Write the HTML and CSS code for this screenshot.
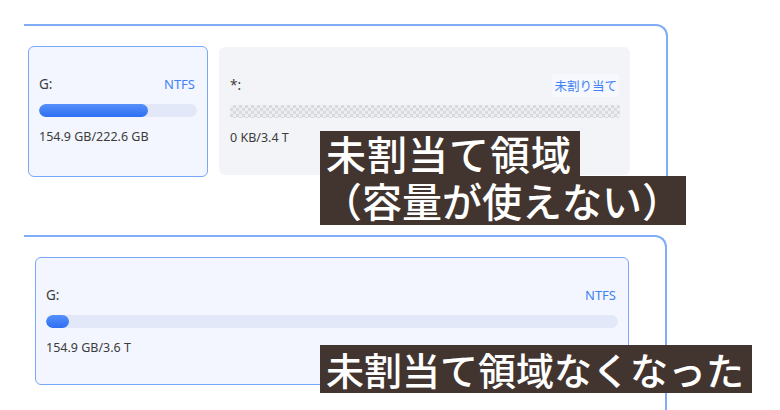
FILE: index.html
```html
<!DOCTYPE html>
<html lang="ja">
<head>
  <meta charset="UTF-8">
  <title>未割当て領域</title>
  <link rel="stylesheet" href="styles.css">
</head>
<body>
  <div class="shot">
    <!-- before -->
    <div class="panel panel-top">
      <div class="card card-used card-small">
        <div class="card-head"><span>G:</span><span class="fs">NTFS</span></div>
        <div class="bar"><div class="fill" style="width: 69%"></div></div>
        <div class="size">154.9 GB/222.6 GB</div>
      </div>
      <div class="card card-free">
        <div class="card-head"><span>*:</span><span class="fs fs-ja">未割り当て</span></div>
        <div class="bar bar-empty"></div>
        <div class="size">0 KB/3.4 T</div>
      </div>
    </div>

    <!-- after -->
    <div class="panel panel-bottom">
      <div class="card card-used card-wide">
        <div class="card-head"><span>G:</span><span class="fs">NTFS</span></div>
        <div class="bar"><div class="fill" style="width: 4%"></div></div>
        <div class="size">154.9 GB/3.6 T</div>
      </div>
    </div>

    <div class="caption caption-one">
      <span class="line line-a">未割当て領域</span>
      <span class="line line-b">（容量が使えない）</span>
    </div>
    <div class="caption caption-two">
      <span class="line line-c">未割当て領域なくなった</span>
    </div>
  </div>
</body>
</html>
```

FILE: styles.css
```css
body {
  margin: 0;
  background: #fff;
  font-family: 'Noto Sans', 'Noto Sans CJK JP', sans-serif;
}
.shot {
  position: relative;
  width: 780px;
  height: 410px;
  overflow: hidden;
}
.panel {
  margin-left: 24px;
  border-top: 2px solid #80adf8;
  border-right: 2px solid #80adf8;
  border-top-right-radius: 12px;
  box-sizing: border-box;
}
.panel-top {
  margin-top: 24px;
  width: 644px;
  height: 201px;
  padding: 20px 36px 0 4px;
  display: flex;
  align-items: flex-start;
  gap: 11px;
}
.panel-bottom {
  margin-top: 10px;
  width: 643px;
  height: 200px;
  padding: 20px 37px 0 11px;
}
.card {
  box-sizing: border-box;
  padding: 29px 11px 0;
  border-radius: 6px;
  color: #3c3c3c;
  font-size: 12.5px;
}
.card-used {
  background: #f3f6fe;
  border: 1.5px solid #7aa8f8;
  padding: 28px 10px 0;
}
.card-small { width: 180px; height: 131px; }
.card-wide { width: 594px; height: 128px; }
.card-free {
  flex: 1;
  height: 128px;
  margin-top: 1px;
  background: #f3f4f8;
  padding-right: 10px;
}
.card-head {
  display: flex;
  justify-content: space-between;
  align-items: center;
  height: 18px;
  padding-right: 2px;
  font-size: 13.5px;
}
.fs {
  color: #3f82f6;
  font-size: 13px;
}
.fs-ja {
  font-family: 'Noto Sans CJK JP', sans-serif;
  font-size: 12.5px;
  background: #f6f8fe;
  padding: 2px 2px;
  margin-right: -1px;
}
.bar {
  margin-top: 11px;
  height: 13px;
  border-radius: 7px;
  background: #e2e8f7;
  overflow: hidden;
}
.fill {
  height: 100%;
  border-radius: 7px;
  background: linear-gradient(#5590fa, #2f6ff2);
}
.bar-empty {
  border-radius: 2px;
  background-color: #eeeff3;
  background-image:
    linear-gradient(45deg, #d9dade 25%, transparent 25%, transparent 75%, #d9dade 75%),
    linear-gradient(45deg, #d9dade 25%, transparent 25%, transparent 75%, #d9dade 75%);
  background-size: 6px 6px;
  background-position: 0 0, 3px 3px;
  filter: blur(0.4px);
}
.size {
  margin-top: 11px;
  line-height: 18px;
  font-size: 12.5px;
}
.caption {
  position: absolute;
  left: 320px;
  display: flex;
  flex-direction: column;
  align-items: flex-start;
  font-family: 'Noto Sans CJK JP', sans-serif;
  font-weight: 500;
  color: #fff;
}
.caption-one { top: 131px; }
.caption-two { top: 345px; }
.line {
  display: block;
  background: #42352f;
  white-space: nowrap;
}
.line-a {
  font-size: 40px;
  line-height: 45px;
  padding: 0 8px 0 6px;
  letter-spacing: 1px;
}
.line-b {
  font-size: 40px;
  line-height: 49px;
  padding: 0 4px 0 2px;
}
.line-c {
  font-size: 38px;
  line-height: 48px;
  padding: 0 8px 0 6px;
}
```
